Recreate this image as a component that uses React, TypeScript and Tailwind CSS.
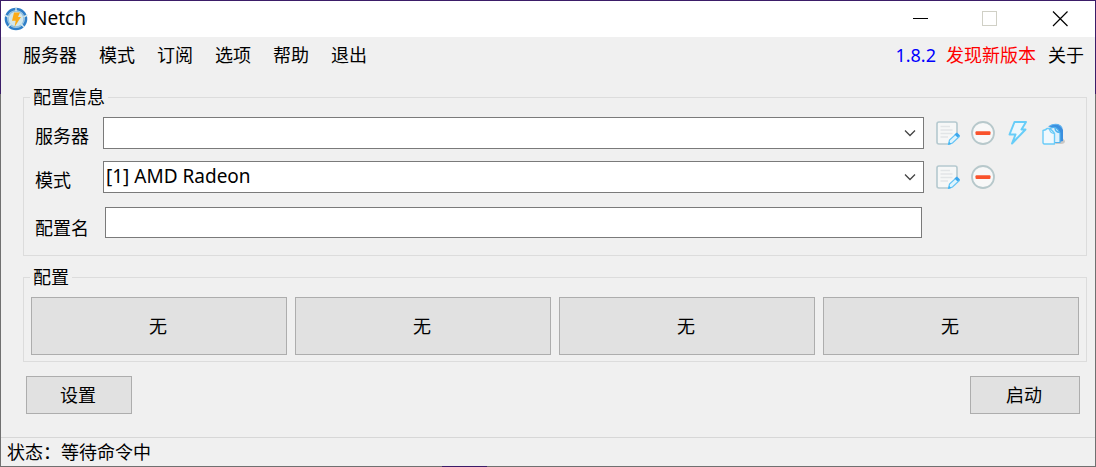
import type { ReactNode } from "react";

const menus = ["服务器", "模式", "订阅", "选项", "帮助", "退出"];
const profiles = ["无", "无", "无", "无"];

function AppIcon() {
    return (
        <svg width="24" height="24" viewBox="0 0 24 24" aria-hidden="true">
            <circle cx="12" cy="12" r="10" fill="#d3e7ea" stroke="#2f7fc8" strokeWidth="2.600" />
            <circle cx="12" cy="12" r="8" fill="none" stroke="#8fbfe0" strokeWidth="1.400" />
            <path d="M12 0v4M23.500 8l-4 2M20 20l-3-3M4 20l3-3M.5 8l4 2" stroke="#d3e7ea" strokeWidth="1.400" />
            <path d="M10 5.500h6l-2 4.500h3L10.500 20l1.200-6.300H8z" fill="#fbab18" />
        </svg>
    );
}

function EditIcon() {
    return (
        <svg width="24" height="24" viewBox="0 0 24 24" fill="none" aria-hidden="true">
            <path d="M12 23H3Q1 23 1 21V3Q1 1 3 1H19Q21 1 21 3V12" fill="#f6f7f7" stroke="#b5c9cf" strokeWidth="1.600" />
            <path d="M4.500 5.500H14M4.500 9H16.500M4.500 12.500H16.500M4.500 16H12" stroke="#e2e5e7" strokeWidth="1.400" />
            <path d="M12.500 23.500l1-4.500 7-6.500 3 3-7 6.500z" fill="#dff4fd" stroke="#63c3f5" strokeWidth="1.200" />
            <path d="M18.500 13.500l2.500-2 3 3-2.500 2z" fill="#3ba7ee" />
            <path d="M12.200 23.700l.8-3 2.400 2.200z" fill="#3fb4f2" />
        </svg>
    );
}

function DeleteIcon() {
    return (
        <svg width="24" height="24" viewBox="0 0 24 24" fill="none" aria-hidden="true">
            <circle cx="12" cy="12" r="11" fill="#f8f8f8" stroke="#b7c8cb" strokeWidth="1.800" />
            <rect x="4.500" y="10.300" width="15" height="3.600" rx="1" fill="#f9532d" />
        </svg>
    );
}

function SpeedIcon() {
    return (
        <svg width="24" height="24" viewBox="0 0 24 24" fill="none" aria-hidden="true">
            <path d="M8.500 1H20L15.500 8.500H19.500L6 22.500L9.500 13.500H3.500z" fill="#ecf7fc" stroke="#67cdf8" strokeWidth="2" strokeLinejoin="round" />
        </svg>
    );
}

function CopyIcon() {
    return (
        <svg width="24" height="24" viewBox="0 0 24 24" fill="none" aria-hidden="true">
            <path d="M20 15l4 5q0 3-4 3h-6z" fill="#cbc8c5" />
            <path d="M7 6Q11 2.500 17 3.500Q21 5 22 9V20L18 21V12L14 7z" fill="#3b8fdf" />
            <path d="M8 5.500Q12 2.500 17 3.500Q20 4.500 21 7" stroke="#5cb2f0" strokeWidth="1.200" />
            <path d="M9 7.500Q13 5.500 15 7Q17 8 19 12V21.500H12z" fill="#dff1fc" stroke="#4fb3ef" strokeWidth="1.200" />
            <path d="M14 6.500Q14 11 18.500 11.500" stroke="#4fb3ef" strokeWidth="1.400" />
            <path d="M2 9.500Q5 9 6 7.500Q10 7 13.500 12.500V23H3L2 22z" fill="#f0f8fd" stroke="#69cbf8" strokeWidth="1.400" strokeLinejoin="round" />
            <path d="M8.500 8Q9 12 13 12.500" stroke="#69cbf8" strokeWidth="1.200" />
        </svg>
    );
}

function IconButton({ label, children }: { label: string; children: ReactNode }) {
    return (
        <button type="button" aria-label={label} className="h-6 w-6 shrink-0">
            {children}
        </button>
    );
}

function ComboBox({ id, options }: { id: string; options: string[] }) {
    return (
        <div className="relative h-8">
            <select
                id={id}
                className="block h-8 w-full appearance-none border border-[#7a7a7a] bg-white pr-8 pb-[2px] pl-[2px] text-[19px] outline-none"
            >
                {options.map((o) => (
                    <option key={o}>{o}</option>
                ))}
            </select>
            <svg
                width="12"
                height="8"
                viewBox="0 0 12 8"
                fill="none"
                className="pointer-events-none absolute top-3 right-2"
                aria-hidden="true"
            >
                <path d="M1 1.500l5 5 5-5" stroke="#444" strokeWidth="1.300" />
            </svg>
        </div>
    );
}

function Group({ title, className, children }: { title: string; className: string; children: ReactNode }) {
    return (
        <fieldset className={`min-w-0 border border-[#dcdcdc] ${className}`}>
            <legend className="px-[3px] leading-[21px]">{title}</legend>
            {children}
        </fieldset>
    );
}

export default function App() {
    return (
        <div className="relative flex min-h-screen flex-col bg-[linear-gradient(#3b1d68_94px,#707070_94px)] p-px font-['Noto_Sans','Noto_Sans_CJK_SC',sans-serif] text-[18px] leading-[26px] text-black">
            <header className="flex h-9 items-center bg-white pl-[3px]">
                <AppIcon />
                <h1 className="ml-[5px] flex-1 pb-[2px] text-[19px]">Netch</h1>
                <button type="button" aria-label="最小化" className="flex h-9 w-[70px] items-center justify-center">
                    <svg width="16" height="16" viewBox="0 0 16 16" stroke="#000">
                        <path d="M1 7.500H16" />
                    </svg>
                </button>
                <button type="button" aria-label="最大化" disabled className="flex h-9 w-[70px] items-center justify-center">
                    <svg width="16" height="16" viewBox="0 0 16 16" fill="none" stroke="#d0d0c6">
                        <rect x=".5" y=".5" width="14" height="14" />
                    </svg>
                </button>
                <button type="button" aria-label="关闭" className="flex h-9 w-[70px] items-center justify-center">
                    <svg width="16" height="16" viewBox="0 0 16 16" stroke="#000" strokeWidth="1.200">
                        <path d="M1 .5l14.500 14.500M15.500 .5l-14.500 14.500" />
                    </svg>
                </button>
            </header>

            <div className="flex flex-1 flex-col bg-[#f0f0f0]">
                <nav className="flex h-9 items-center pr-[11px] pb-px pl-[22px]">
                    <div className="flex flex-1 gap-[22px]">
                        {menus.map((m) => (
                            <button key={m} type="button">
                                {m}
                            </button>
                        ))}
                    </div>
                    <a href="#version" className="text-[#0000ff]">1.8.2</a>
                    <a href="#update" className="ml-[10px] text-[#ff0000]">发现新版本</a>
                    <button type="button" className="ml-3">关于</button>
                </nav>

                <main className="flex flex-1 flex-col pt-[14px] pr-2 pl-[22px]">
                    <Group title="配置信息" className="pr-[20px] pb-[14px] pl-[6px]">
                        <div className="grid grid-cols-[68px_1fr_142px] gap-y-3 pt-[9px] pl-[5px]">
                            <label htmlFor="server" className="pt-[6px]">服务器</label>
                            <ComboBox id="server" options={[""]} />
                            <div className="flex items-center gap-[11px] pl-3">
                                <IconButton label="编辑服务器"><EditIcon /></IconButton>
                                <IconButton label="删除服务器"><DeleteIcon /></IconButton>
                                <IconButton label="测速"><SpeedIcon /></IconButton>
                                <IconButton label="复制"><CopyIcon /></IconButton>
                            </div>

                            <label htmlFor="mode" className="pt-[6px]">模式</label>
                            <ComboBox id="mode" options={["[1] AMD Radeon"]} />
                            <div className="flex items-center gap-[11px] pl-3">
                                <IconButton label="编辑模式"><EditIcon /></IconButton>
                                <IconButton label="删除模式"><DeleteIcon /></IconButton>
                            </div>

                            <label htmlFor="profile" className="pt-[10px]">配置名</label>
                            <div className="px-[2px] pt-[2px]">
                                <input
                                    id="profile"
                                    type="text"
                                    className="block h-[31px] w-full border border-[#7a7a7a] bg-white px-[3px] outline-none"
                                />
                            </div>
                        </div>
                    </Group>

                    <Group title="配置" className="mt-[11px] px-[6px] pb-[6px]">
                        <div className="grid grid-cols-4 gap-2 px-px pt-[9px]">
                            {profiles.map((p, i) => (
                                <button key={i} type="button" className="h-[58px] border border-[#adadad] bg-[#e1e1e1] pr-[2px]">
                                    {p}
                                </button>
                            ))}
                        </div>
                    </Group>

                    <div className="flex justify-between pt-[14px] pr-[7px] pb-[23px] pl-[3px]">
                        <button type="button" className="h-[38px] w-[106px] border border-[#adadad] bg-[#e1e1e1] pr-[2px]">设置</button>
                        <button type="button" className="h-[38px] w-[110px] border border-[#adadad] bg-[#e1e1e1] pr-[2px]">启动</button>
                    </div>
                </main>

                <footer className="border-t border-[#d7d7d7] px-[6px] py-px">状态：等待命令中</footer>
            </div>
            <span className="absolute bottom-0 left-[442px] h-px w-[45px] bg-[#3b1d68]" />
        </div>
    );
}
